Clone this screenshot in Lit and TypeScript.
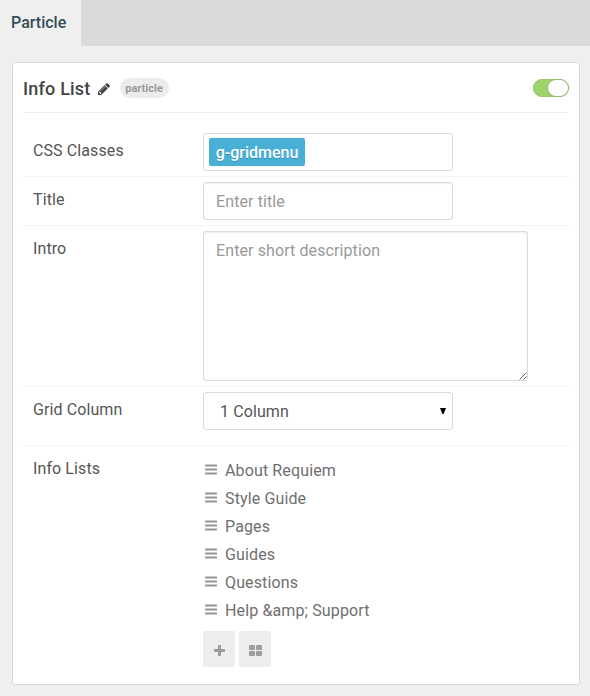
import { LitElement, html, css, svg } from "lit";
import { customElement, property, state } from "lit/decorators.js";

@customElement("form-row")
class FormRow extends LitElement {
  @property() label = "";

  static styles = css`
    :host {
      display: flex;
      box-sizing: border-box;
      padding: 5px 10px;
      border-bottom: 1px solid #f4f4f4;
    }
    .label {
      width: 170px;
      flex: none;
      padding-top: 6px;
      line-height: 24px;
      letter-spacing: 0.1px;
      color: #555;
    }
    .field {
      flex: 1;
      min-width: 0;
    }
  `;

  render() {
    return html`<div class="label">${this.label}</div>
      <div class="field"><slot></slot></div>`;
  }
}

@customElement("app-root")
class AppRoot extends LitElement {
  @state() items = ["About Requiem", "Style Guide", "Pages", "Guides", "Questions", "Help &amp; Support"];

  static styles = css`
    :host {
      display: flex;
      flex-direction: column;
      box-sizing: border-box;
      height: 696px;
      background: #efefef;
      font-family: Roboto, "Liberation Sans", sans-serif;
      font-size: 16px;
      color: #555;
      overflow: hidden;
    }
    .tabs {
      display: flex;
      flex: none;
      height: 46px;
      background: #dadada;
    }
    .tab {
      box-sizing: border-box;
      width: 81px;
      padding-left: 11px;
      line-height: 45px;
      background: #efefef;
      color: #354d59;
      font-weight: 500;
    }
    .card {
      box-sizing: border-box;
      width: 568px;
      height: 623px;
      margin: 16px 0 0 12px;
      padding: 0 11px 0 10px;
      background: #fff;
      border: 1px solid #dadada;
      border-radius: 3px;
    }
    .head {
      display: flex;
      align-items: center;
      box-sizing: border-box;
      height: 50px;
      border-bottom: 1px solid #eee;
      margin-bottom: 15px;
    }
    .title {
      font-size: 18px;
      line-height: 24px;
      font-weight: 500;
      letter-spacing: 0.2px;
      color: #444;
      margin-top: 2px;
    }
    .pencil {
      margin: 2px 0 0 6px;
      width: 14px;
      height: 14px;
      fill: #444;
    }
    .badge {
      margin-left: 9px;
      margin-top: 1px;
      width: 49px;
      height: 20px;
      line-height: 21px;
      text-align: center;
      border-radius: 10px;
      background: #ececec;
      color: #999;
      font-size: 11px;
      font-weight: 700;
    }
    .toggle {
      display: flex;
      justify-content: flex-end;
      box-sizing: border-box;
      width: 36px;
      height: 18px;
      margin-left: auto;
      margin-right: -1px;
      padding: 1px;
      border-radius: 9px;
      background: #9fd46a;
      box-shadow: inset 0 0 1px 0 rgba(0, 0, 0, 0.35);
    }
    .knob {
      width: 20px;
      height: 16px;
      border-radius: 8px;
      background: #fff;
      box-shadow: 0 0 2px rgba(0, 0, 0, 0.25);
    }
    .body {
      margin-right: -1px;
    }
    .body > form-row:nth-child(1) {
      height: 49px;
    }
    .grid {
      height: 59px;
    }
    .last {
      border-bottom: 0;
    }
    .box {
      display: block;
      box-sizing: border-box;
      width: 250px;
      height: 38px;
      margin: 0;
      border: 1px solid #dadada;
      border-radius: 3px;
      background: #fff;
      font: inherit;
      color: #555;
      outline: none;
    }
    .text {
      padding: 0 12px;
      letter-spacing: 0.1px;
      box-shadow: inset 0 1px 2px rgba(0, 0, 0, 0.07);
    }
    .text::placeholder {
      color: #999;
      opacity: 1;
    }
    .chips {
      padding: 4px 5px;
    }
    .chip {
      box-sizing: border-box;
      display: inline-block;
      height: 28px;
      width: 96px;
      line-height: 29px;
      text-align: center;
      border-radius: 2px;
      background: #48b0d7;
      color: #fff;
      font-weight: 500;
      text-shadow: 0 1px 0 rgba(0, 51, 83, 0.3);
    }
    .area-wrap {
      position: relative;
      width: 325px;
      height: 150px;
    }
    .area {
      width: 325px;
      height: 150px;
      padding: 7px 12px;
      line-height: 24px;
      resize: none;
    }
    .grip {
      position: absolute;
      right: 1px;
      bottom: 1px;
      width: 8px;
      height: 8px;
      stroke: #555;
      stroke-width: 0.9;
      fill: none;
    }
    .select {
      display: flex;
      align-items: center;
      justify-content: space-between;
      padding: 0 6px 0 16px;
      letter-spacing: 0.1px;
    }
    .arrow {
      width: 6px;
      height: 6px;
      fill: #000;
      margin-top: -1px;
    }
    .list {
      margin-top: 6px;
    }
    .item {
      display: flex;
      height: 28px;
      line-height: 28px;
      letter-spacing: 0.13px;
      color: #6f6f6f;
    }
    .bars {
      width: 12px;
      height: 11px;
      margin: 7px 8px 0 2px;
      fill: #949494;
    }
    .actions {
      display: flex;
      gap: 4px;
      margin-top: 6px;
    }
    .btn {
      display: flex;
      align-items: center;
      justify-content: center;
      width: 32px;
      height: 36px;
      padding: 0;
      border: 0;
      border-radius: 2px;
      background: #ededed;
    }
    .btn svg {
      width: 13px;
      height: 11px;
      fill: #9d9d9d;
      margin-top: 2px;
    }
  `;

  render() {
    const bars = svg`<rect y="0.6" width="12" height="1.8" rx=".4"/><rect y="4.6" width="12" height="1.8" rx=".4"/><rect y="8.6" width="12" height="1.8" rx=".4"/>`;
    return html`
      <div class="tabs"><div class="tab">Particle</div></div>
      <div class="card">
        <div class="head">
          <div class="title">Info List</div>
          <svg class="pencil" viewBox="0 0 1792 1792"><path d="M491 1536l91-91-235-235-91 91v107h128v128h107zm523-928q0-22-22-22-10 0-17 7l-542 542q-7 7-7 17 0 22 22 22 10 0 17-7l542-542q7-7 7-17zm-54-192l416 416-832 832h-416v-416zm683 96q0 53-37 90l-166 166-416-416 166-165q36-38 90-38 53 0 91 38l235 234q37 39 37 91z"/></svg>
          <div class="badge">particle</div>
          <div class="toggle"><div class="knob"></div></div>
        </div>
        <div class="body">
          <form-row label="CSS Classes"><div class="box chips"><span class="chip">g-gridmenu</span></div></form-row>
          <form-row label="Title"><input class="box text" placeholder="Enter title" /></form-row>
          <form-row label="Intro">
            <div class="area-wrap">
              <textarea class="box text area" placeholder="Enter short description"></textarea>
              <svg class="grip" viewBox="0 0 8 8"><path d="M0.5 7.5L7.5 0.5M4.5 7.5L7.5 4.5"/></svg>
            </div>
          </form-row>
          <form-row class="grid" label="Grid Column">
            <div class="box select"><span>1 Column</span><svg class="arrow" viewBox="0 0 6 6"><path d="M0 0h6L3.6 6H2.4z"/></svg></div>
          </form-row>
          <form-row class="last" label="Info Lists">
            <div class="list">
              ${this.items.map((t) => html`<div class="item"><svg class="bars" viewBox="0 0 12 11">${bars}</svg><span>${t}</span></div>`)}
            </div>
            <div class="actions">
              <button class="btn" aria-label="Add"><svg viewBox="0 0 13 11"><path d="M5.7 0h1.6q.7 0 .7.7V4h3.3q.7 0 .7.7v1.6q0 .7-.7.7H8v3.3q0 .7-.7.7H5.7q-.7 0-.7-.7V7H1.7Q1 7 1 6.3V4.7Q1 4 1.700 4H5V.7q0-.7.7-.7z"/></svg></button>
              <button class="btn" aria-label="Grid"><svg viewBox="0 0 13 11"><rect width="6" height="5" rx=".9"/><rect x="7" width="6" height="5" rx=".9"/><rect y="6" width="6" height="5" rx=".9"/><rect x="7" y="6" width="6" height="5" rx=".9"/></svg></button>
            </div>
          </form-row>
        </div>
      </div>
    `;
  }
}
